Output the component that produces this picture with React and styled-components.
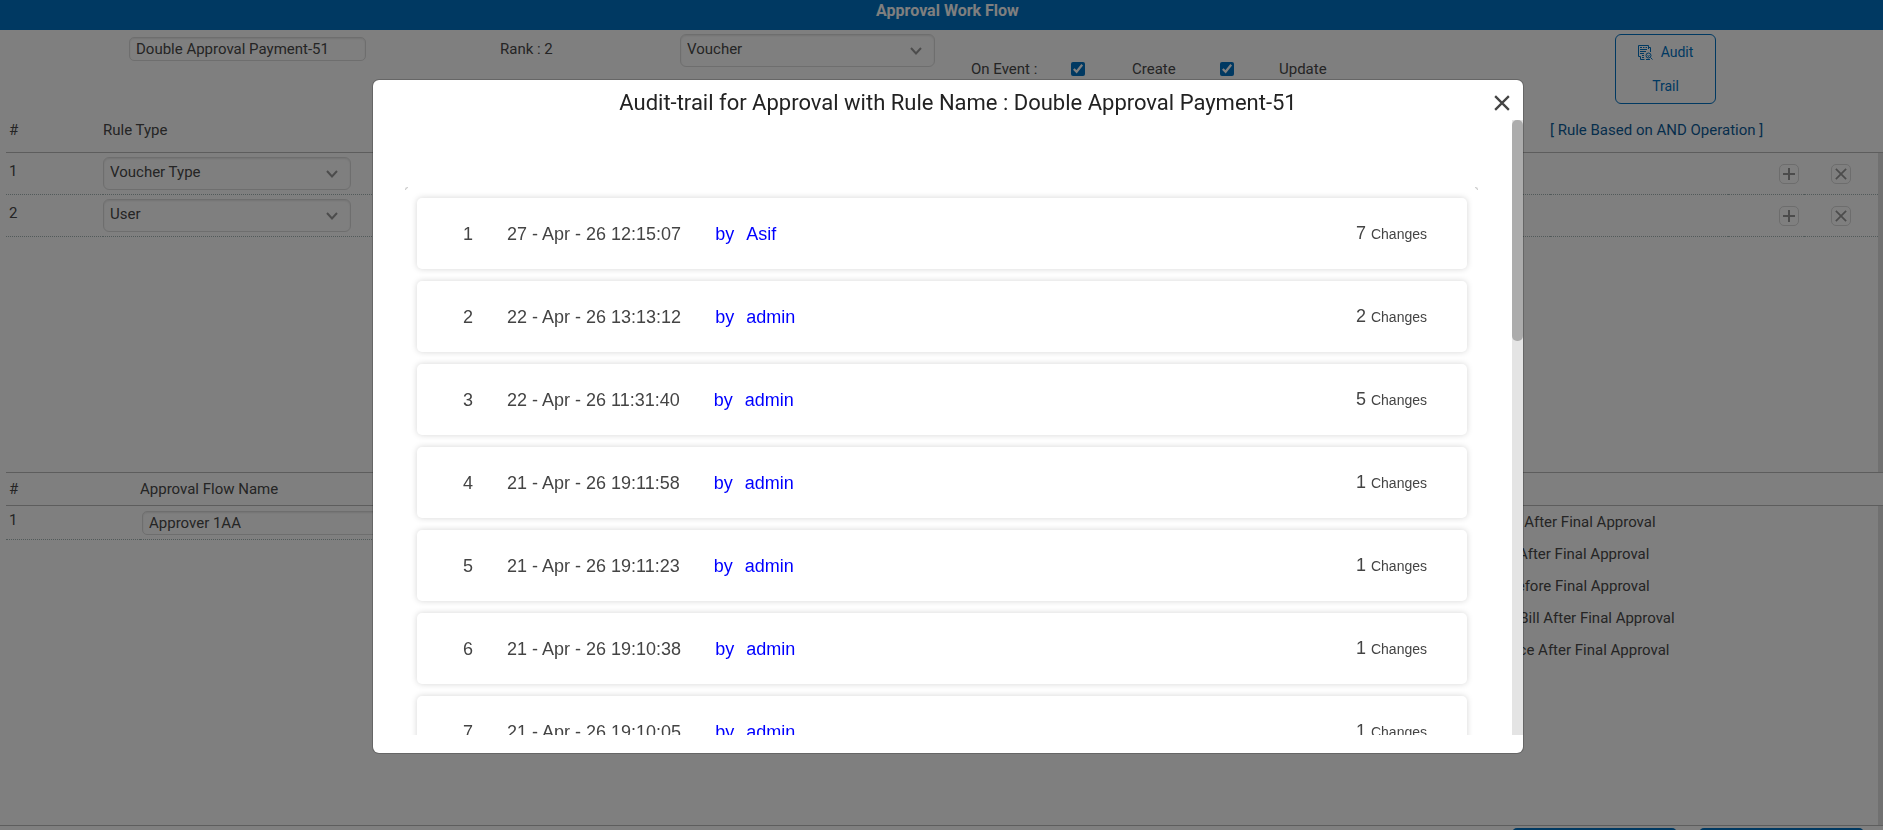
import React from "react";
import styled, { createGlobalStyle } from "styled-components";

const GlobalStyle = createGlobalStyle`
  * {
    box-sizing: border-box;
  }
  body {
    margin: 0;
    font-family: Roboto, "Liberation Sans", sans-serif;
    font-size: 15px;
    color: #4a4a4a;
    background: #fff;
  }
  input, select, button {
    font: inherit;
    color: inherit;
  }
`;

const Page = styled.div`
  display: flex;
  flex-direction: column;
  width: 100%;
  height: 100vh;
  overflow: hidden;
`;

const TopBar = styled.header`
  flex: none;
  height: 30px;
  padding-left: 12px;
  background: #0072c4;
  color: #fff;
  text-align: center;
`;

const PageTitle = styled.h1`
  margin: 0;
  font-size: 16px;
  line-height: 22px;
  font-weight: 700;
`;

const Toolbar = styled.div`
  flex: none;
  display: grid;
  grid-template-columns: 371px 180px 291px 644px auto;
  align-items: start;
  height: 78px;
  padding: 4px 0 0 129px;
`;

const Field = styled.input`
  width: ${(p) => p.$width || "100%"};
  height: 24px;
  padding: 0 6px;
  border: 1px solid #ddd;
  border-radius: 5px;
  background: #fff;
  box-shadow: inset 0 1px 2px rgba(0, 0, 0, 0.1);
`;

const NameCell = styled.div`
  padding-top: 3px;
`;

const Rank = styled.span`
  padding-top: 5px;
  line-height: 20px;
`;

const SelectBox = styled.div`
  display: grid;
  align-items: center;
  width: ${(p) => p.$width};
  height: 33px;

  select,
  svg {
    grid-area: 1 / 1;
  }
  select {
    appearance: none;
    width: 100%;
    height: 100%;
    padding: 0 6px 4px;
    border: 1px solid #ddd;
    border-radius: 6px;
    background: #fff;
    box-shadow: inset 0 1px 2px rgba(0, 0, 0, 0.1);
  }
  svg {
    justify-self: end;
    margin-right: 13px;
    pointer-events: none;
  }
`;

const Events = styled.div`
  display: grid;
  grid-template-columns: 100px 61px 88px 59px auto;
  align-items: center;
  padding-top: 25px;
  line-height: 20px;
`;

const Check = styled.input.attrs({ type: "checkbox" })`
  width: 14px;
  height: 14px;
  margin: 0;
  accent-color: #0072c4;
`;

const AuditButton = styled.button`
  width: 101px;
  height: 70px;
  padding: 0 20px 2px;
  border: 1px solid #0072c4;
  border-radius: 6px;
  background: #fff;
  color: #0072c4;
  font-size: 14px;
  line-height: 34px;

  svg {
    margin-right: 8px;
    vertical-align: -3px;
  }
`;

const Panel = styled.section`
  flex: 1 0 ${(p) => p.$height};
  padding-left: 6px;
`;

const Table = styled.table`
  width: 100%;
  height: 100%;
  table-layout: fixed;
  border-collapse: separate;
  border-spacing: 0;

  th {
    height: ${(p) => p.$head};
    padding: 0;
    border-bottom: 1px solid #bbb;
    border-top: ${(p) => (p.$ruled ? "1px solid #bbb" : "0")};
    font-weight: 400;
    text-align: left;
  }
  th:first-child {
    padding-left: 3px;
  }
  td {
    padding: 0;
  }
`;

const Col = styled.col`
  width: ${(p) => p.$width};
`;

const Row = styled.tr`
  height: ${(p) => p.$height};

  td {
    border-bottom: 1px dotted #a5b5b5;
  }
  td:first-child {
    padding: 0 0 6px 3px;
  }
  td:last-child {
    border: 0;
    background: #e0e0e0;
  }
`;

const Filler = styled.tr`
  td:last-child {
    background: #e0e0e0;
  }
`;

const Operation = styled.a`
  color: #0d5c99;
  text-decoration: none;
`;

const ActionCell = styled.td`
  text-align: ${(p) => p.$align};

  && {
    padding-right: ${(p) => (p.$align === "right" ? "5px" : "0")};
  }
`;

const IconButton = styled.button`
  display: inline-grid;
  place-items: center;
  width: 20px;
  height: 20px;
  padding: 0;
  border: 1px solid #dadada;
  border-radius: 5px;
  background: #fff;
  color: #999;
  vertical-align: middle;
`;

const NameInputCell = styled.td`
  && {
    padding-left: 2px;
  }
`;

const OptionsCell = styled.td`
  && {
    border: 0;
    vertical-align: top;
  }
`;

/* only as tall as its row, the list runs on below it */
const Options = styled.div`
  display: flex;
  flex-direction: column;
  height: 32px;

  label {
    flex: none;
    display: flex;
    align-items: center;
    gap: 10px;
    height: 32px;
    white-space: nowrap;
  }
`;

const Footer = styled.footer`
  flex: none;
  display: flex;
  justify-content: flex-end;
  gap: 22px;
  padding: 2px 19px 8px 0;
  border-top: 1px solid #bbb;
`;

const FooterButton = styled.button`
  width: 165px;
  height: 34px;
  border: 0;
  border-radius: 5px;
  background: #0072c4;
  color: #fff;
`;

const Backdrop = styled.div`
  position: fixed;
  inset: 0;
  display: flex;
  justify-content: center;
  align-items: flex-start;
  padding: 79px 0 0 13px;
  background: rgba(0, 0, 0, 0.5);
`;

const Modal = styled.div`
  display: flex;
  flex-direction: column;
  width: calc(100% - 718px);
  height: calc(100vh - 155px);
  padding-bottom: 18px;
  border: 1px solid rgba(0, 0, 0, 0.2);
  border-radius: 7px;
  background: #fff;
  background-clip: padding-box;
`;

const ModalHeader = styled.div`
  flex: none;
  display: flex;
  align-items: center;
  height: 40px;
  padding: 6px 13px 0 49px;
  color: #222;
`;

const ModalTitle = styled.h2`
  flex: 1;
  margin: 0;
  font-size: 22px;
  line-height: 30px;
  font-weight: 400;
  text-align: center;
`;

const CloseButton = styled.button`
  display: grid;
  padding: 0;
  border: 0;
  background: none;
  color: #444;
`;

const ModalBody = styled.div`
  flex: 1;
  display: flex;
  min-height: 0;
`;

const Trail = styled.div`
  flex: 1;
  overflow: hidden;
  padding: 67px 34px 0 32px;
`;

const Corners = styled.div`
  display: flex;
  justify-content: space-between;
`;

const Corner = styled.span`
  width: 3px;
  height: 3px;
  border: 0 solid #ccc;
  border-top-width: 1px;
  border-left-width: ${(p) => (p.$side === "left" ? "1px" : "0")};
  border-right-width: ${(p) => (p.$side === "right" ? "1px" : "0")};
  border-radius: ${(p) => (p.$side === "left" ? "3px 0 0 0" : "0 3px 0 0")};
`;

const Cards = styled.ol`
  display: flex;
  flex-direction: column;
  gap: 12px;
  margin: 0;
  padding: 8px 11px 12px 12px;
  list-style: none;
`;

const Card = styled.li`
  display: flex;
  align-items: center;
  height: 71px;
  padding: 0 40px;
  border-radius: 5px;
  background: #fff;
  box-shadow: 0 0 6px rgba(0, 0, 0, 0.17);
  font-family: "Liberation Sans", Arial, sans-serif;
  font-size: 18px;
  line-height: 20px;
  color: #444;
`;

const Index = styled.span`
  width: 22px;
  margin-right: 28px;
  text-align: center;
`;

const Author = styled.span`
  display: flex;
  gap: 12px;
  margin-left: 34px;
  color: #0000ff;
`;

const Changes = styled.span`
  margin-left: auto;

  small {
    font-size: 14px;
  }
`;

const ScrollTrack = styled.div`
  width: 11px;
  background: #e4e4e4;
`;

const ScrollThumb = styled.div`
  height: 36%;
  border-radius: 5px;
  background: #acacac;
`;

const entries = [
  { date: "27 - Apr - 26 12:15:07", author: "Asif", changes: 7 },
  { date: "22 - Apr - 26 13:13:12", author: "admin", changes: 2 },
  { date: "22 - Apr - 26 11:31:40", author: "admin", changes: 5 },
  { date: "21 - Apr - 26 19:11:58", author: "admin", changes: 1 },
  { date: "21 - Apr - 26 19:11:23", author: "admin", changes: 1 },
  { date: "21 - Apr - 26 19:10:38", author: "admin", changes: 1 },
  { date: "21 - Apr - 26 19:10:05", author: "admin", changes: 1 },
];

const options = [
  "Send Email After Final Approval",
  "Send SMS After Final Approval",
  "Send Bill Before Final Approval",
  "Email Sale Bill After Final Approval",
  "Email Invoice After Final Approval",
];

const Chevron = () => (
  <svg width="12" height="8" viewBox="0 0 12 8" fill="none" stroke="#999" strokeWidth="2">
    <path d="M1 1l5 5.5L11 1" />
  </svg>
);

const Cross = ({ size, stroke }) => (
  <svg width={size} height={size} viewBox="0 0 14 14" fill="none" stroke="currentColor" strokeWidth={stroke}>
    <path d="M1 1l12 12M13 1L1 13" />
  </svg>
);

const Plus = () => (
  <svg width="12" height="12" viewBox="0 0 12 12" fill="none" stroke="currentColor" strokeWidth="2">
    <path d="M6 0v12M0 6h12" />
  </svg>
);

const AuditIcon = () => (
  <svg width="15" height="15" viewBox="0 0 15 15" fill="none" stroke="currentColor" strokeWidth="1">
    <path d="M10.5 4V.5H.5v11h2v3h4M10.5 2.5h2V7M2 2.5h2M5 2.5h1.5M7.5 2.5H9M2 4.5h7M2 6.5h6M2 8.5h4M4 10.5h2M4 12.5h2" />
    <circle cx="10.5" cy="10.5" r="2.5" />
    <path d="M9.500 10.500l1 1 1-1.500M12.500 12.500l2 2M8 14.500h4" />
  </svg>
);

function Select({ label, value, width }) {
  return (
    <SelectBox $width={width}>
      <select aria-label={label} defaultValue={value}>
        <option>{value}</option>
      </select>
      <Chevron />
    </SelectBox>
  );
}

function RuleTable() {
  return (
    <Panel $height="364px">
      <Table $head="45px">
        <colgroup>
          <Col $width="97px" />
          <Col />
          <Col $width="178px" />
          <Col $width="76px" />
          <Col $width="74px" />
          <Col $width="5px" />
        </colgroup>
        <thead>
          <tr>
            <th>#</th>
            <th>Rule Type</th>
            <th colSpan={4}>
              <Operation href="#">[ Rule Based on AND Operation ]</Operation>
            </th>
          </tr>
        </thead>
        <tbody>
          {["Voucher Type", "User"].map((type, i) => (
            <Row key={type} $height="42px">
              <td>{i + 1}</td>
              <td>
                <Select label={`Rule type ${i + 1}`} value={type} width="248px" />
              </td>
              <td />
              <ActionCell $align="right">
                <IconButton aria-label="Add rule">
                  <Plus />
                </IconButton>
              </ActionCell>
              <ActionCell $align="center">
                <IconButton aria-label="Remove rule">
                  <Cross size="12" stroke="2" />
                </IconButton>
              </ActionCell>
              <td />
            </Row>
          ))}
          <Filler>
            <td colSpan={5} />
            <td />
          </Filler>
        </tbody>
      </Table>
    </Panel>
  );
}

function FlowTable() {
  return (
    <Panel $height="353px">
      <Table $head="34px" $ruled>
        <colgroup>
          <Col $width="134px" />
          <Col />
          <Col $width="456px" />
          <Col $width="5px" />
        </colgroup>
        <thead>
          <tr>
            <th>#</th>
            <th>Approval Flow Name</th>
            <th colSpan={2} />
          </tr>
        </thead>
        <tbody>
          <Row $height="34px">
            <td>1</td>
            <NameInputCell>
              <Field aria-label="Approval flow name" defaultValue="Approver 1AA" $width="260px" />
            </NameInputCell>
            <OptionsCell>
              <Options>
                {options.map((text) => (
                  <label key={text}>
                    <Check />
                    {text}
                  </label>
                ))}
              </Options>
            </OptionsCell>
            <td />
          </Row>
          <Filler>
            <td colSpan={3} />
            <td />
          </Filler>
        </tbody>
      </Table>
    </Panel>
  );
}

function AuditTrail() {
  return (
    <Backdrop>
      <Modal role="dialog" aria-modal="true" aria-labelledby="audit-title">
        <ModalHeader>
          <ModalTitle id="audit-title">
            Audit-trail for Approval with Rule Name : Double Approval Payment-51
          </ModalTitle>
          <CloseButton aria-label="Close">
            <Cross size="16" stroke="2" />
          </CloseButton>
        </ModalHeader>
        <ModalBody>
          <Trail>
            <Corners>
              <Corner $side="left" />
              <Corner $side="right" />
            </Corners>
            <Cards>
              {entries.map((entry, i) => (
                <Card key={entry.date}>
                  <Index>{i + 1}</Index>
                  <span>{entry.date}</span>
                  <Author>
                    <span>by</span>
                    <span>{entry.author}</span>
                  </Author>
                  <Changes>
                    {entry.changes} <small>Changes</small>
                  </Changes>
                </Card>
              ))}
            </Cards>
          </Trail>
          <ScrollTrack>
            <ScrollThumb />
          </ScrollTrack>
        </ModalBody>
      </Modal>
    </Backdrop>
  );
}

function App() {
  return (
    <>
      <GlobalStyle />
      <Page>
        <TopBar>
          <PageTitle>Approval Work Flow</PageTitle>
        </TopBar>
        <Toolbar>
          <NameCell>
            <Field aria-label="Rule name" defaultValue="Double Approval Payment-51" $width="237px" />
          </NameCell>
          <Rank>Rank : 2</Rank>
          <Select label="Document" value="Voucher" width="255px" />
          <Events>
            <span>On Event :</span>
            <Check id="on-create" defaultChecked />
            <label htmlFor="on-create">Create</label>
            <Check id="on-update" defaultChecked />
            <label htmlFor="on-update">Update</label>
          </Events>
          <AuditButton>
            <AuditIcon />
            Audit Trail
          </AuditButton>
        </Toolbar>
        <RuleTable />
        <FlowTable />
        <Footer>
          <FooterButton aria-label="Save" />
          <FooterButton aria-label="Cancel" />
        </Footer>
      </Page>
      <AuditTrail />
    </>
  );
}

export default App;
